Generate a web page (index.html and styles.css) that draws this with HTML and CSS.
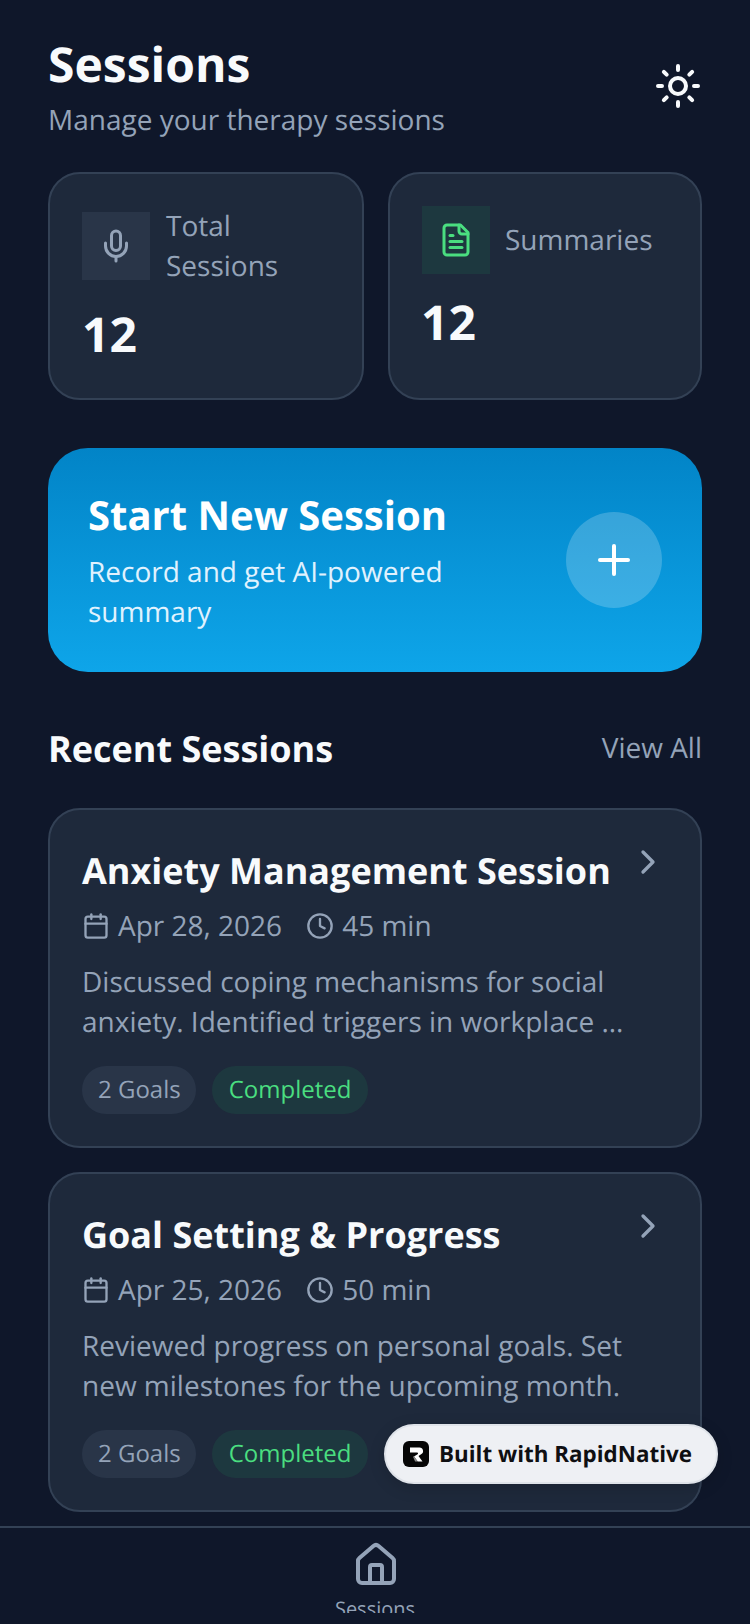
FILE: index.html
```html
<!DOCTYPE html>
<html lang="en">
<head>
<meta charset="utf-8">
<title>Sessions</title>
<link rel="stylesheet" href="styles.css">
</head>
<body>
<div class="app">
  <main class="main">
    <header class="header">
      <div>
        <h1 class="title">Sessions</h1>
        <p class="subtitle">Manage your therapy sessions</p>
      </div>
      <svg class="icon-48 sun" viewBox="0 0 24 24"><circle cx="12" cy="12" r="4"/><path d="M12 2v2M12 20v2M4.93 4.93l1.41 1.41M17.66 17.66l1.41 1.41M2 12h2M20 12h2M6.34 17.66l-1.41 1.41M19.07 4.93l-1.41 1.41"/></svg>
    </header>

    <section class="stats">
      <div class="stat">
        <div class="stat-head">
          <div class="stat-icon stat-icon-slate">
            <svg class="icon-36 slate" viewBox="0 0 24 24"><path d="M12 19v3"/><path d="M19 10v2a7 7 0 0 1-14 0v-2"/><rect x="9" y="2" width="6" height="13" rx="3"/></svg>
          </div>
          <span class="stat-label">Total Sessions</span>
        </div>
        <div class="stat-value">12</div>
      </div>
      <div class="stat">
        <div class="stat-head">
          <div class="stat-icon stat-icon-green">
            <svg class="icon-36 green" viewBox="0 0 24 24"><path d="M15 2H6a2 2 0 0 0-2 2v16a2 2 0 0 0 2 2h12a2 2 0 0 0 2-2V7Z"/><path d="M14 2v4a2 2 0 0 0 2 2h4"/><path d="M10 9H8"/><path d="M16 13H8"/><path d="M16 17H8"/></svg>
          </div>
          <span class="stat-label">Summaries</span>
        </div>
        <div class="stat-value stat-value-right">12</div>
      </div>
    </section>

    <section class="hero">
      <div class="hero-text">
        <h2 class="hero-title">Start New Session</h2>
        <p class="hero-sub">Record and get AI-powered summary</p>
      </div>
      <div class="hero-btn">
        <svg class="icon-48 white" viewBox="0 0 24 24"><path d="M5 12h14"/><path d="M12 5v14"/></svg>
      </div>
    </section>

    <div class="section-head">
      <h2 class="section-title">Recent Sessions</h2>
      <span class="view-all">View All</span>
    </div>

    <article class="card">
      <div class="card-top">
        <h3 class="card-title">Anxiety Management Session</h3>
        <svg class="icon-40 slate chevron" viewBox="0 0 24 24"><path d="m9 18 6-6-6-6"/></svg>
      </div>
      <div class="meta">
        <span class="meta-item"><svg class="icon-28 slate" viewBox="0 0 24 24"><path d="M8 2v4"/><path d="M16 2v4"/><rect x="3" y="4" width="18" height="18" rx="2"/><path d="M3 10h18"/></svg><span class="meta-text">Apr 28, 2026</span></span>
        <span class="meta-item"><svg class="icon-28 slate" viewBox="0 0 24 24"><circle cx="12" cy="12" r="10"/><path d="M12 6v6l4 2"/></svg><span class="meta-text">45 min</span></span>
      </div>
      <p class="desc">Discussed coping mechanisms for social anxiety. Identified triggers in workplace ...</p>
      <div class="tags">
        <span class="tag tag-slate">2 Goals</span>
        <span class="tag tag-green">Completed</span>
      </div>
    </article>

    <article class="card">
      <div class="card-top">
        <h3 class="card-title">Goal Setting &amp; Progress</h3>
        <svg class="icon-40 slate chevron" viewBox="0 0 24 24"><path d="m9 18 6-6-6-6"/></svg>
      </div>
      <div class="meta">
        <span class="meta-item"><svg class="icon-28 slate" viewBox="0 0 24 24"><path d="M8 2v4"/><path d="M16 2v4"/><rect x="3" y="4" width="18" height="18" rx="2"/><path d="M3 10h18"/></svg><span class="meta-text">Apr 25, 2026</span></span>
        <span class="meta-item"><svg class="icon-28 slate" viewBox="0 0 24 24"><circle cx="12" cy="12" r="10"/><path d="M12 6v6l4 2"/></svg><span class="meta-text">50 min</span></span>
      </div>
      <p class="desc">Reviewed progress on personal goals. Set new milestones for the upcoming month.</p>
      <div class="tags">
        <span class="tag tag-slate">2 Goals</span>
        <span class="tag tag-green">Completed</span>
      </div>
    </article>
  </main>

  <nav class="nav">
    <svg class="icon-48 slate nav-icon" viewBox="0 0 24 24"><path d="M15 21v-8a1 1 0 0 0-1-1h-4a1 1 0 0 0-1 1v8"/><path d="M3 10a2 2 0 0 1 .709-1.528l7-5.999a2 2 0 0 1 2.582 0l7 5.999A2 2 0 0 1 21 10v9a2 2 0 0 1-2 2H5a2 2 0 0 1-2-2z"/></svg>
    <span class="nav-label">Sessions</span>
  </nav>

  <div class="built">
    <svg class="built-logo" viewBox="0 0 26 26"><rect width="26" height="26" rx="6" fill="#060606"/><path d="M7 6.5h9.5a3.6 3.6 0 0 1 1.6 6.8L15.5 15l4 5.5h-4.8l-3.7-5 3.6-2.2c.8-.5.5-1.8-.5-1.8H7z" fill="#fff"/><path d="M10 15.8l1-.5 3.7 5.2h-2.6z" fill="#8a8a8a"/></svg>
    <span class="built-text">Built with RapidNative</span>
  </div>
</div>
</body>
</html>
```
FILE: styles.css
```css
* { box-sizing: border-box; margin: 0; padding: 0; }
html, body { width: 750px; height: 1624px; overflow: hidden; }
body { background: #0f172a; font-family: "Open Sans", sans-serif; color: #f8fafc; text-rendering: geometricPrecision; }
svg { display: block; flex: none; fill: none; stroke: currentColor; stroke-width: 2; stroke-linecap: round; stroke-linejoin: round; }

.app { position: relative; width: 750px; height: 1624px; display: flex; flex-direction: column; overflow: hidden; }
.main { flex: 1; min-height: 0; overflow: hidden; padding: 32px 48px 0; display: flex; flex-direction: column; }

.icon-48 { width: 48px; height: 48px; }
.icon-40 { width: 40px; height: 40px; }
.icon-36 { width: 36px; height: 36px; }
.icon-28 { width: 28px; height: 28px; }
.slate { color: #94a3b8; }
.green { color: #4ade80; }
.white { color: #fff; }
.sun { color: #f8fafc; }

.header { display: flex; align-items: center; justify-content: space-between; margin-bottom: 32px; }
.title { font-size: 48px; line-height: 66px; font-weight: 700; margin-bottom: 2px; }
.subtitle { font-size: 28px; line-height: 40px; color: #94a3b8; }

.stats { display: grid; grid-template-columns: 315.5px 314.5px; gap: 24px; margin-bottom: 48px; }
.stat { min-width: 0; background: #1e293b; border: 2px solid #334155; border-radius: 32px; padding: 32px; display: flex; flex-direction: column; }
.stat-head { display: flex; align-items: center; gap: 16px; margin-bottom: 16px; }
.stat-icon { width: 68px; height: 68px; flex: none; display: flex; align-items: center; justify-content: center; }
.stat-icon-slate { background: rgba(51, 65, 85, 0.5); }
.stat-icon-green { background: rgba(34, 197, 94, 0.1); margin-right: -0.5px; }
.stat-label { font-size: 28px; line-height: 40px; color: #94a3b8; }
.stat-value { font-size: 48px; line-height: 66px; margin-bottom: -2px; font-weight: 700; }
.stat-value-right { margin-left: -0.5px; }

.hero { height: 224px; flex: none; border-radius: 40px; padding: 40px; background: linear-gradient(180deg, #0284c7, #0ea5e9); display: flex; align-items: center; gap: 16px; margin-bottom: 48px; }
.hero-text { flex: 1; min-width: 0; }
.hero-title { font-size: 40px; line-height: 54px; font-weight: 700; color: #fff; margin-bottom: 10px; }
.hero-sub { font-size: 28px; line-height: 40px; color: #e0f2fe; }
.hero-btn { width: 96px; height: 96px; flex: none; border-radius: 50%; background: rgba(255, 255, 255, 0.2); display: flex; align-items: center; justify-content: center; }

.section-head { height: 56px; display: flex; align-items: center; justify-content: space-between; margin-bottom: 32px; }
.section-title { font-size: 36px; line-height: 56px; font-weight: 700; margin-top: 2px; }
.view-all { font-size: 28px; line-height: 40px; color: #94a3b8; }

.card { flex: none; background: #1e293b; border: 2px solid #334155; border-radius: 32px; padding: 32px; margin-bottom: 24px; }
.card-top { height: 56px; display: flex; justify-content: space-between; gap: 16px; margin-bottom: 8px; }
.card-title { font-size: 36px; line-height: 58px; font-weight: 700; }
.meta { display: flex; gap: 24px; margin-bottom: 16px; }
.meta-item { display: flex; align-items: center; gap: 8px; }
.meta-text { font-size: 28px; line-height: 40px; color: #94a3b8; }
.desc { font-size: 28px; line-height: 40px; color: #94a3b8; margin-bottom: 24px; }
.tags { display: flex; gap: 16px; }
.tag { height: 48px; border-radius: 24px; font-size: 24px; line-height: 48px; }
.tag-slate { padding: 0 15px 0 16px; background: rgba(51, 65, 85, 0.5); color: #94a3b8; }
.tag-green { padding: 0 17px; background: rgba(34, 197, 94, 0.1); color: #4ade80; }

.nav { height: 98px; flex: none; border-top: 2px solid #334155; display: flex; flex-direction: column; align-items: center; padding-top: 13px; overflow: hidden; background: #0f172a; }
.nav-icon { margin-left: 1px; }
.nav-label { display: block; height: 18px; margin-top: 6px; overflow: hidden; font-size: 20px; line-height: 28px; color: #94a3b8; }

.built { position: absolute; left: 384px; top: 1424px; width: 334px; height: 60px; border-radius: 30px; background: #eef0f4; border: 2px solid #dfe3e9; box-shadow: 0 4px 16px rgba(0, 0, 0, 0.15); display: flex; align-items: center; gap: 10px; padding-left: 17px; }
.built-logo { width: 26px; height: 26px; stroke: none; }
.built-text { font-size: 22.4px; font-weight: 700; line-height: 32px; color: #0f0f12; }
```
